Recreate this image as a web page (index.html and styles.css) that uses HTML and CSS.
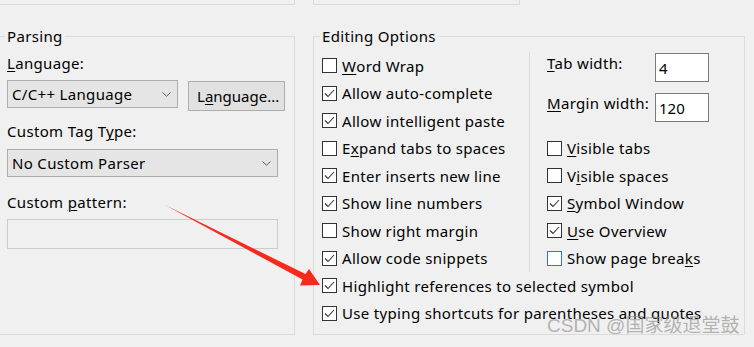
FILE: index.html
```html
<!DOCTYPE html>
<html lang="en">
<head>
  <meta charset="UTF-8" />
  <title>Editor Settings</title>
  <link rel="stylesheet" href="styles.css">
</head>
<body>
  <div class="top">
    <div class="top-left"></div>
    <div class="top-right"></div>
  </div>

  <div class="main">
    <fieldset class="group parsing">
      <legend>Parsing</legend>
      <div class="lbl first"><u>L</u>anguage:</div>
      <div class="lang-row">
        <div class="combo lang-combo">
          <span>C/C++ Language</span>
          <svg class="chev" viewBox="0 0 9 5"><polyline points="0.5,0.5 4.5,4.2 8.5,0.5"/></svg>
        </div>
        <button class="btn">L<u>a</u>nguage...</button>
      </div>
      <div class="lbl tag-lbl">Custom Tag T<u>y</u>pe:</div>
      <div class="combo wide">
        <span>No Custom Parser</span>
        <svg class="chev" viewBox="0 0 9 5"><polyline points="0.5,0.5 4.5,4.2 8.5,0.5"/></svg>
      </div>
      <div class="lbl pat-lbl">Custom <u>p</u>attern:</div>
      <input class="pattern" type="text" disabled>
    </fieldset>

    <fieldset class="group editing">
      <legend>Editing Options</legend>
      <div class="cols">
        <div class="col-left">
          <div class="check"><span class="box"></span><u>W</u>ord Wrap</div>
          <div class="check"><span class="box"><svg viewBox="0 0 13 13"><polyline points="2,6.5 5,9.5 11,3"/></svg></span>Allow auto-complete</div>
          <div class="check"><span class="box"><svg viewBox="0 0 13 13"><polyline points="2,6.5 5,9.5 11,3"/></svg></span>Allow intelligent paste</div>
          <div class="check"><span class="box"></span>E<u>x</u>pand tabs to spaces</div>
          <div class="check"><span class="box"><svg viewBox="0 0 13 13"><polyline points="2,6.5 5,9.5 11,3"/></svg></span>Enter inserts new line</div>
          <div class="check"><span class="box"><svg viewBox="0 0 13 13"><polyline points="2,6.5 5,9.5 11,3"/></svg></span>Show line numbers</div>
          <div class="check"><span class="box"></span>Show right margin</div>
          <div class="check"><span class="box"><svg viewBox="0 0 13 13"><polyline points="2,6.5 5,9.5 11,3"/></svg></span>Allow code snippets</div>
        </div>
        <div class="col-right">
          <div class="fields">
            <div class="field"><label><u>T</u>ab width:</label><input type="text" value="4"></div>
            <div class="field"><label><u>M</u>argin width:</label><input type="text" value="120"></div>
          </div>
          <div class="check"><span class="box"></span><u>V</u>isible tabs</div>
          <div class="check"><span class="box"></span>V<u>i</u>sible spaces</div>
          <div class="check"><span class="box"><svg viewBox="0 0 13 13"><polyline points="2,6.5 5,9.5 11,3"/></svg></span><u>S</u>ymbol Window</div>
          <div class="check"><span class="box"><svg viewBox="0 0 13 13"><polyline points="2,6.5 5,9.5 11,3"/></svg></span><u>U</u>se Overview</div>
          <div class="check"><span class="box hover"></span>Show page brea<u>k</u>s</div>
        </div>
      </div>
      <div class="check"><span class="box"><svg viewBox="0 0 13 13"><polyline points="2,6.5 5,9.5 11,3"/></svg></span>Highlight references to selected symbol</div>
      <div class="check"><span class="box"><svg viewBox="0 0 13 13"><polyline points="2,6.5 5,9.5 11,3"/></svg></span>Use typing shortcuts for parentheses and quotes</div>
    </fieldset>
  </div>

  <!-- annotation arrow drawn over the dialog -->
  <svg class="arrow" viewBox="0 0 754 347">
    <polygon points="165,205 305.5,274 309,269 320,285 300,285.5 302.5,279.5"/>
  </svg>
  <div class="watermark">CSDN @国家级退堂鼓</div>
</body>
</html>
```

FILE: styles.css
```css
body {
  margin: 0;
  background: #f0f0f0;
  font-family: "Noto Sans", sans-serif;
  font-size: 15px;
  line-height: 20px;
  letter-spacing: 0.33px;
  color: #000;
  overflow: hidden;
}
u {
  text-decoration-thickness: 1px;
  text-underline-offset: 2px;
}
.top {
  display: flex;
  height: 5px;
}
.top > div {
  box-sizing: border-box;
  height: 5px;
  border: 1px solid #dcdcdc;
  border-top: none;
}
.top-left {
  width: 296px;
  margin-left: -1px;
}
.top-right {
  width: 207px;
  margin-left: 18px;
}
.main {
  display: flex;
  margin-top: 22px;
}
.group {
  box-sizing: border-box;
  height: 308px;
  margin: 0;
  padding: 0 0 0 7px;
  min-width: 0;
  border: 1px solid #dcdcdc;
}
.group legend {
  padding: 0 2px;
  margin-left: -2px;
  line-height: 19px;
}
.parsing {
  width: 296px;
  margin-left: -1px;
}
.editing {
  width: 432px;
  margin-left: 18px;
  padding-left: 8px;
}

/* parsing */
.lbl.first {
  margin-top: 7px;
}
.lang-row {
  display: flex;
  align-items: flex-start;
  margin-top: 7px;
}
.combo {
  box-sizing: border-box;
  display: flex;
  align-items: center;
  justify-content: space-between;
  height: 28px;
  padding: 0 6px 0 4px;
  background: #e5e5e5;
  border: 1px solid #adadad;
}
.lang-combo {
  width: 171px;
}
.combo.wide {
  width: 271px;
  margin-top: 8px;
}
.chev {
  width: 9px;
  height: 5px;
  fill: none;
  stroke: #5a5a5a;
  stroke-width: 1;
}
.btn {
  box-sizing: border-box;
  width: 97px;
  height: 30px;
  margin: 1px 0 0 10px;
  padding: 0 0 0 8px;
  text-align: left;
  font: inherit;
  letter-spacing: 0;
  color: #000;
  background: #e1e1e1;
  border: 1px solid #adadad;
}
.tag-lbl {
  margin-top: 10px;
}
.pat-lbl {
  margin-top: 15px;
}
.pattern {
  box-sizing: border-box;
  display: block;
  width: 271px;
  height: 30px;
  margin-top: 7px;
  background: #f0f0f0;
  border: 1px solid #cccccc;
}

/* editing options */
.cols {
  display: flex;
  margin-top: 6px;
}
.col-left {
  width: 207px;
  border-right: 1px solid #dcdcdc;
}
.col-right {
  padding-left: 17px;
}
.fields {
  margin-bottom: 2.5px;
}
.field {
  display: flex;
  align-items: flex-start;
  height: 40px;
}
.field label {
  width: 108px;
  padding-top: 1px;
  line-height: 20px;
}
.field input {
  box-sizing: border-box;
  width: 54px;
  height: 29px;
  margin-top: 1px;
  padding: 0 3px;
  font: inherit;
  letter-spacing: 0;
  color: #000;
  background: #fff;
  border: 1px solid #7a7a7a;
}
.check {
  display: flex;
  align-items: center;
  height: 27.5px;
  line-height: 18px;
  white-space: nowrap;
}
.box {
  box-sizing: border-box;
  display: flex;
  flex: none;
  width: 15px;
  height: 15px;
  margin-right: 5px;
  background: #fff;
  border: 1px solid #333;
}
.box.hover {
  border-color: #2b79c2;
}
.box svg {
  width: 13px;
  height: 13px;
  fill: none;
  stroke: #333;
  stroke-width: 1.1;
}

/* overlays */
.arrow {
  position: absolute;
  left: 0;
  top: 0;
  width: 754px;
  height: 347px;
  pointer-events: none;
}
.arrow polygon {
  fill: #f52a1c;
}
.watermark {
  position: absolute;
  left: 547px;
  top: 314px;
  font-family: "Liberation Sans", "Noto Sans CJK SC", sans-serif;
  font-size: 19px;
  line-height: 24px;
  letter-spacing: 0;
  color: rgba(150, 150, 150, 0.7);
  white-space: nowrap;
}
```
